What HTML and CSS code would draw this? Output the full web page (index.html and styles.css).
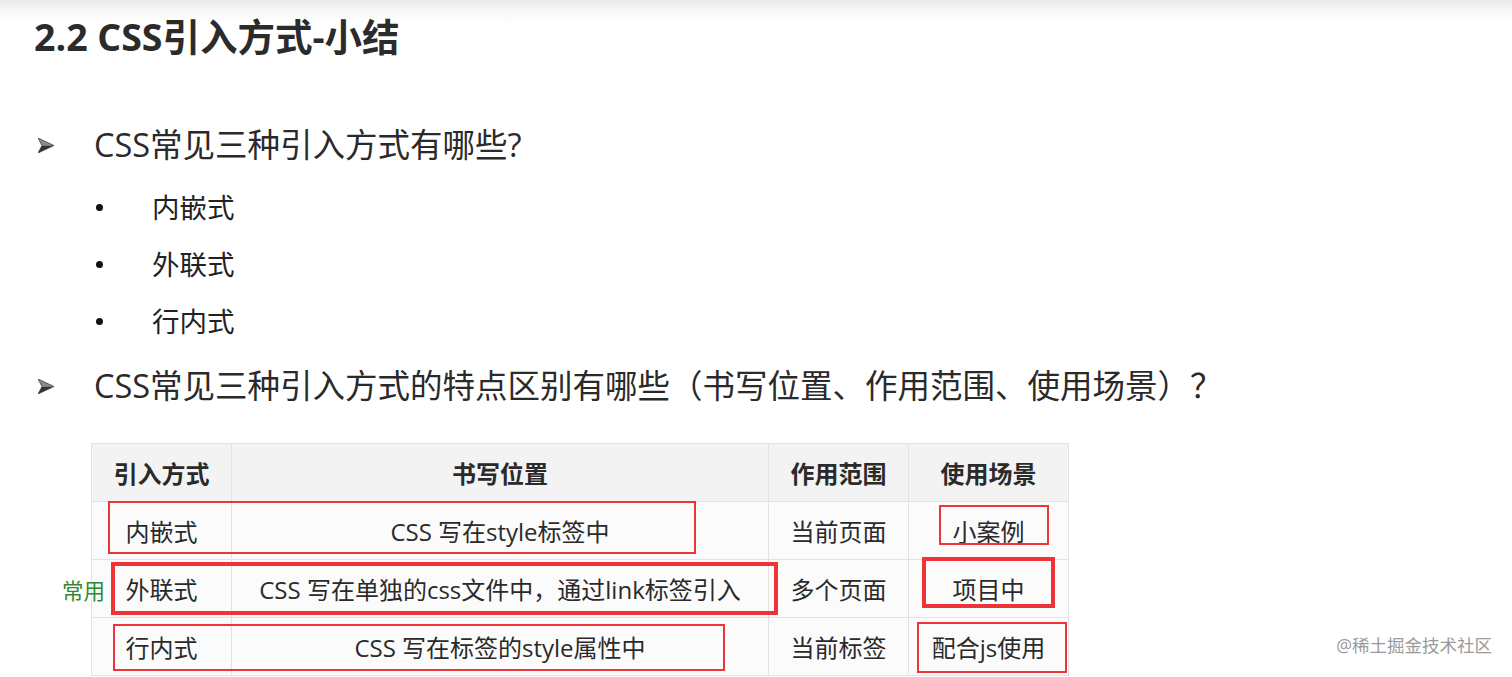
FILE: index.html
```html
<!DOCTYPE html>
<html lang="zh-CN">
<head>
    <meta charset="UTF-8">
    <meta name="viewport" content="width=device-width, initial-scale=1.0">
    <title>2.2 CSS引入方式-小结</title>
    <link rel="stylesheet" href="styles.css">
</head>
<body>
    <div class="slide">
        <h1 class="title">2.2 CSS引入方式-小结</h1>

        <ul class="points">
            <li class="point">
                <svg class="arrow" width="16" height="15" viewBox="0 0 16 15">
                    <polygon points="0,0 16,7.5 4,7.5" fill="#8a8a8a"/>
                    <polygon points="4,7.5 16,7.5 0,15" fill="#333"/>
                    <polygon points="0,0 16,7.5 0,15 4,7.5" fill="none" stroke="#444" stroke-width="0.8"/>
                </svg>
                CSS常见三种引入方式有哪些?
            </li>
        </ul>
        <ul class="subs">
            <li>内嵌式</li>
            <li>外联式</li>
            <li>行内式</li>
        </ul>
        <ul class="points">
            <li class="point">
                <svg class="arrow" width="16" height="15" viewBox="0 0 16 15">
                    <polygon points="0,0 16,7.5 4,7.5" fill="#8a8a8a"/>
                    <polygon points="4,7.5 16,7.5 0,15" fill="#333"/>
                    <polygon points="0,0 16,7.5 0,15 4,7.5" fill="none" stroke="#444" stroke-width="0.8"/>
                </svg>
                CSS常见三种引入方式的特点区别有哪些（书写位置、作用范围、使用场景）？
            </li>
        </ul>

        <div class="table-wrap">
            <table class="compare">
                <colgroup>
                    <col class="c1">
                    <col class="c2">
                    <col class="c3">
                    <col class="c4">
                </colgroup>
                <thead>
                    <tr>
                        <th>引入方式</th>
                        <th>书写位置</th>
                        <th>作用范围</th>
                        <th>使用场景</th>
                    </tr>
                </thead>
                <tbody>
                    <tr>
                        <td>内嵌式</td>
                        <td>CSS 写在style标签中</td>
                        <td>当前页面</td>
                        <td>小案例</td>
                    </tr>
                    <tr>
                        <td>外联式</td>
                        <td>CSS 写在单独的css文件中，通过link标签引入</td>
                        <td>多个页面</td>
                        <td>项目中</td>
                    </tr>
                    <tr>
                        <td>行内式</td>
                        <td>CSS 写在标签的style属性中</td>
                        <td>当前标签</td>
                        <td>配合js使用</td>
                    </tr>
                </tbody>
            </table>

            <!-- hand drawn marks over the table -->
            <span class="note">常用</span>
            <div class="mark thin m1"></div>
            <div class="mark thick m2"></div>
            <div class="mark thin m3"></div>
            <div class="mark thin m4"></div>
            <div class="mark thick m5"></div>
            <div class="mark thin m6"></div>
        </div>

        <div class="watermark">@稀土掘金技术社区</div>
    </div>
</body>
</html>
```

FILE: styles.css
```css
body {
    margin: 0;
    background: #fff;
    font-family: "Open Sans", "Noto Sans CJK SC", sans-serif;
    color: #262626;
}

.slide {
    position: relative;
    height: 677px;
    overflow: hidden;
    background: linear-gradient(#e9e9e9 0, #f7f7f7 10px, #fff 24px);
}

.title {
    margin: 0;
    padding: 15px 0 0 34px;
    font-size: 37.5px;
    line-height: 44px;
    font-weight: bold;
    color: #2b2b2b;
}

.points {
    list-style: none;
    margin: 0;
    padding: 0;
}

.point {
    display: flex;
    align-items: center;
    padding-left: 38px;
    font-size: 32.5px;
    line-height: 44px;
    color: #2a2a2a;
}

.points:first-of-type {
    margin-top: 64px;
}

.arrow {
    flex: none;
    margin-right: 40px;
}

.subs {
    list-style: none;
    margin: 12px 0 14px;
    padding: 0;
}

.subs li {
    display: flex;
    align-items: center;
    padding-left: 96px;
    font-size: 27.5px;
    line-height: 57px;
    color: #222;
}

.subs li::before {
    content: "";
    width: 7px;
    height: 7px;
    border-radius: 50%;
    background: #111;
    margin-right: 49px;
}

.table-wrap {
    position: relative;
    margin: 35px 0 0 91px;
    width: 977px;
}

.compare {
    border-collapse: collapse;
    width: 977px;
    table-layout: fixed;
    font-size: 24px;
    color: #2a2a2a;
}

.c1 { width: 140px; }
.c2 { width: 537px; }
.c3 { width: 140px; }
.c4 { width: 160px; }

.compare th, .compare td {
    height: 57px;
    padding: 0;
    text-align: center;
    border: 1px solid #e2e2e2;
}

.compare th {
    background: #f3f3f3;
    font-weight: bold;
}

.compare td {
    background: #fbfbfb;
}

.mark {
    position: absolute;
    border-style: solid;
    border-color: #ec3439;
    box-sizing: border-box;
}

.thin { border-width: 2px; }
.thick { border-width: 4px; }

.m1 { left: 17px; top: 58px; width: 588px; height: 53px; }
.m2 { left: 20px; top: 119px; width: 667px; height: 53px; }
.m3 { left: 22px; top: 181px; width: 612px; height: 47px; }
.m4 { left: 848px; top: 62px; width: 110px; height: 40px; }
.m5 { left: 831px; top: 114px; width: 133px; height: 51px; }
.m6 { left: 826px; top: 179px; width: 150px; height: 51px; }

.note {
    position: absolute;
    left: -29px;
    top: 134px;
    font-size: 21.5px;
    line-height: 28px;
    color: #2f8a2f;
}

.watermark {
    position: absolute;
    right: 20px;
    top: 634px;
    font-size: 17.5px;
    line-height: 22px;
    color: #9a9a9a;
}
```
